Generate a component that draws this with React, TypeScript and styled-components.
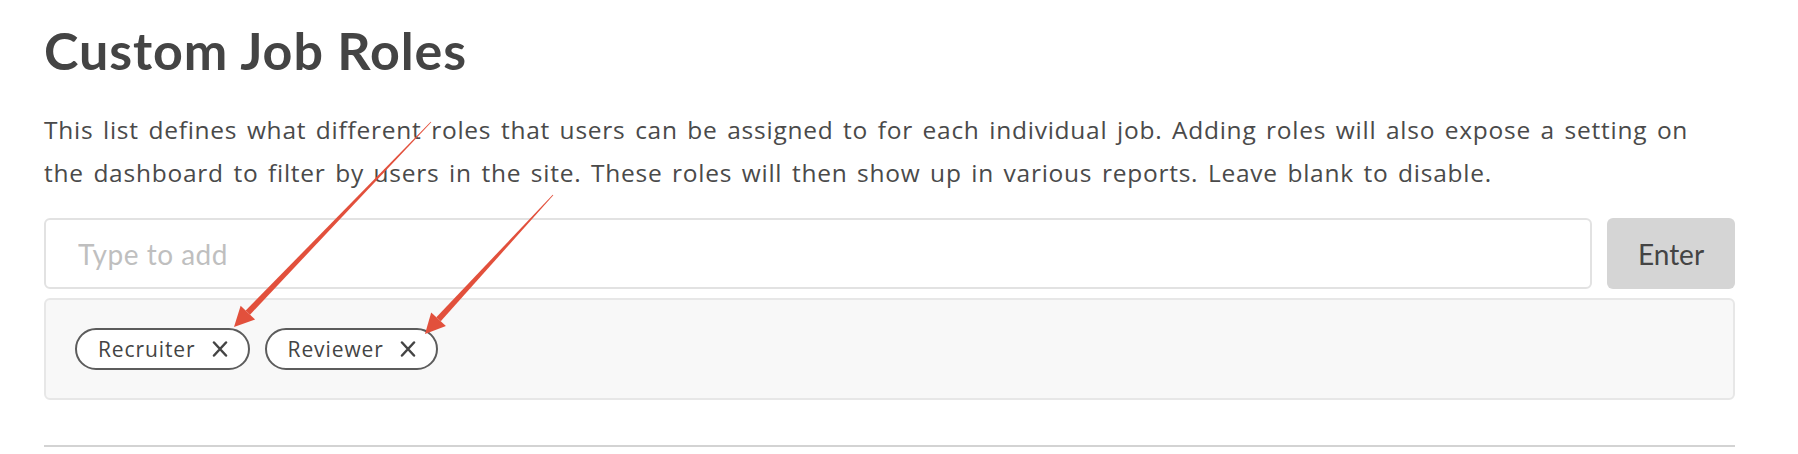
import React from "react";
import styled, { createGlobalStyle } from "styled-components";

const GlobalStyle = createGlobalStyle`
  html, body {
    margin: 0;
    padding: 0;
    background: #ffffff;
  }
  body {
    font-family: "Lato", "Liberation Sans", sans-serif;
    color: #444444;
  }
  * { box-sizing: border-box; }
`;

const Page = styled.main`
  position: relative;
  width: 1798px;
  height: 454px;
  overflow: hidden;
  padding: 24px 63px 0 44px;
`;

const Title = styled.h1`
  margin: 0;
  font-family: "Lato", "Liberation Sans", sans-serif;
  font-size: 52px;
  line-height: 52px;
  font-weight: 700;
  color: #444444;
  letter-spacing: 0.9px;
`;

const Description = styled.p`
  margin: 32px 0 0;
  font-family: "Open Sans", "Liberation Sans", sans-serif;
  font-size: 24.5px;
  line-height: 43px;
  letter-spacing: 0.75px;
  word-spacing: 2.5px;
  color: #4a4a4a;
  white-space: nowrap;
`;

const InputRow = styled.div`
  display: flex;
  gap: 15px;
  margin-top: 24px;
`;

const TextInput = styled.input`
  flex: 1;
  height: 71px;
  border: 2px solid #e2e2e2;
  border-radius: 6px;
  padding: 0 32px;
  font-family: "Lato", "Liberation Sans", sans-serif;
  font-size: 28px;
  letter-spacing: 0.5px;
  color: #444444;
  background: #ffffff;
  outline: none;
  &::placeholder {
    color: #bfbfbf;
  }
`;

const EnterButton = styled.button`
  width: 128px;
  height: 71px;
  border: none;
  border-radius: 6px;
  background: #d5d5d5;
  color: #444444;
  font-family: "Lato", "Liberation Sans", sans-serif;
  font-size: 28px;
  cursor: pointer;
`;

const TagBox = styled.div`
  display: flex;
  flex-wrap: wrap;
  gap: 15px;
  margin-top: 9px;
  padding: 28px 29px;
  background: #f8f8f8;
  border: 2px solid #e7e7e7;
  border-radius: 6px;
`;

const Tag = styled.span`
  display: inline-flex;
  align-items: center;
  gap: 16px;
  height: 42px;
  padding: 0 20px 0 21px;
  border: 2px solid #5c5c5c;
  border-radius: 21px;
  background: #ffffff;
  font-family: "Open Sans", "Liberation Sans", sans-serif;
  font-size: 21px;
  letter-spacing: 0.9px;
  color: #444444;
`;

const RemoveIcon = styled.svg`
  width: 16px;
  height: 16px;
  display: block;
`;

const Divider = styled.hr`
  margin: 45px 0 0;
  height: 2px;
  border: none;
  background: #d3d3d3;
`;

const Overlay = styled.svg`
  position: absolute;
  top: 0;
  left: 0;
  pointer-events: none;
`;

type Pt = [number, number];

function Arrow({ from, to }: { from: Pt; to: Pt }) {
  const dx = to[0] - from[0];
  const dy = to[1] - from[1];
  const len = Math.hypot(dx, dy);
  const ux = dx / len;
  const uy = dy / len;
  const nx = -uy;
  const ny = ux;
  const headLen = 20;
  const headHalf = 10;
  const bx = to[0] - ux * headLen;
  const by = to[1] - uy * headLen;
  const tailW = 0.4;
  const baseW = 3;
  const shaft = [
    [from[0] + nx * tailW, from[1] + ny * tailW],
    [bx + nx * baseW, by + ny * baseW],
    [bx - nx * baseW, by - ny * baseW],
    [from[0] - nx * tailW, from[1] - ny * tailW],
  ];
  const head = [
    [to[0], to[1]],
    [bx + nx * headHalf, by + ny * headHalf],
    [bx - nx * headHalf, by - ny * headHalf],
  ];
  const pts = (a: number[][]) => a.map((p) => p.join(",")).join(" ");
  return (
    <g fill="#e2503c">
      <polygon points={pts(shaft)} />
      <polygon points={pts(head)} />
    </g>
  );
}

function CloseGlyph() {
  return (
    <RemoveIcon viewBox="0 0 16 16" aria-hidden="true">
      <path d="M2 1.5 L14 14.5 M14 1.5 L2 14.5" stroke="#444444" strokeWidth="2.5" strokeLinecap="round" fill="none" />
    </RemoveIcon>
  );
}

const roles = ["Recruiter", "Reviewer"];

export default function App() {
  return (
    <>
      <GlobalStyle />
      <Page>
        <Title>Custom Job Roles</Title>
        <Description>
          This list defines what different roles that users can be assigned to for each individual job. Adding roles will also expose a setting on
          <br />
          the dashboard to filter by users in the site. These roles will then show up in various reports. Leave blank to disable.
        </Description>
        <InputRow>
          <TextInput placeholder="Type to add" />
          <EnterButton>Enter</EnterButton>
        </InputRow>
        <TagBox>
          {roles.map((r) => (
            <Tag key={r}>
              {r}
              <CloseGlyph />
            </Tag>
          ))}
        </TagBox>
        <Divider />
        <Overlay width="1798" height="454" viewBox="0 0 1798 454">
          <Arrow from={[431, 122]} to={[234, 327]} />
          <Arrow from={[553, 195]} to={[425, 334]} />
        </Overlay>
      </Page>
    </>
  );
}
